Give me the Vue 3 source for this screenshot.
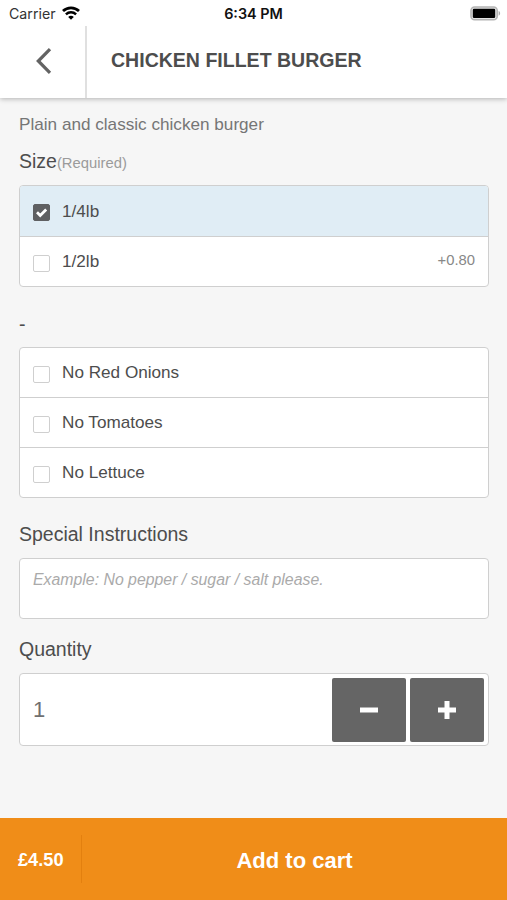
<script setup>
import { ref, computed } from 'vue'

const sizes = ref([
  { label: '1/4lb', extra: '', checked: true },
  { label: '1/2lb', extra: '+0.80', checked: false },
])
const removals = ref([
  { label: 'No Red Onions', checked: false },
  { label: 'No Tomatoes', checked: false },
  { label: 'No Lettuce', checked: false },
])
const quantity = ref(1)
const notes = ref('')

const price = computed(() => {
  const unit = sizes.value[1].checked ? 5.3 : 4.5
  return '£' + (unit * quantity.value).toFixed(2)
})

function pickSize(size) {
  sizes.value.forEach((s) => { s.checked = s === size })
}
</script>

<template>
  <div class="screen">
    <header class="top">
      <div class="status">
        <div class="carrier">
          <span>Carrier</span>
          <svg class="wifi" width="18" height="14" viewBox="0 0 18 14">
            <path d="M1 5.1C5.5.8 12.5.8 17 5.1" fill="none" stroke="#000" stroke-width="2.8" />
            <path d="M3.900 8.300c2.900-2.700 7.300-2.700 10.200 0" fill="none" stroke="#000" stroke-width="2.500" />
            <path d="M9 13.800 6.200 10.900c1.500-1.400 4.100-1.400 5.600 0z" fill="#000" />
          </svg>
        </div>
        <div class="clock">6:34 PM</div>
        <svg class="battery" width="31" height="15" viewBox="0 0 31 15">
          <rect x="1" y="1" width="26.200" height="12.800" rx="3.600" fill="#e4e4e4" stroke="#b4b4b4" stroke-width="1.600" />
          <rect x="2.800" y="2.700" width="22.400" height="9.300" rx="1.200" fill="#000" />
          <path d="M28.600 5c2 .7 2 4 0 4.700z" fill="#aaa" />
        </svg>
      </div>
      <div class="nav">
        <button class="back" aria-label="Back">
          <svg width="18" height="28" viewBox="0 0 18 28">
            <path d="M16 2.200 4.300 14 16 25.800" fill="none" stroke="#636363" stroke-width="3.200" />
          </svg>
        </button>
        <h1>CHICKEN FILLET BURGER</h1>
      </div>
    </header>

    <main>
      <p class="description">Plain and classic chicken burger</p>

      <h2 class="size-title">Size<small>(Required)</small></h2>
      <ul class="card">
        <li v-for="s in sizes" :key="s.label" :class="{ selected: s.checked }" @click="pickSize(s)">
          <span class="box" :class="{ on: s.checked }">
            <svg v-if="s.checked" width="15" height="15" viewBox="0 0 15 15">
              <path d="m3 7.300 3.200 3.200 6-6" fill="none" stroke="#fff" stroke-width="2.800" />
            </svg>
          </span>
          <span class="label">{{ s.label }}</span>
          <span class="extra">{{ s.extra }}</span>
        </li>
      </ul>

      <h2 class="dash-title">-</h2>
      <ul class="card removals">
        <li v-for="r in removals" :key="r.label" @click="r.checked = !r.checked">
          <span class="box" :class="{ on: r.checked }">
            <svg v-if="r.checked" width="15" height="15" viewBox="0 0 15 15">
              <path d="m3 7.300 3.200 3.200 6-6" fill="none" stroke="#fff" stroke-width="2.800" />
            </svg>
          </span>
          <span class="label">{{ r.label }}</span>
        </li>
      </ul>

      <h2 class="notes-title">Special Instructions</h2>
      <textarea v-model="notes" placeholder="Example: No pepper / sugar / salt please."></textarea>

      <h2 class="quantity-title">Quantity</h2>
      <div class="quantity">
        <span class="count">{{ quantity }}</span>
        <button aria-label="Decrease" @click="quantity = Math.max(1, quantity - 1)">
          <svg width="18" height="18" viewBox="0 0 18 18"><path d="M0 6.500h18v5H0z" fill="#fff" /></svg>
        </button>
        <button aria-label="Increase" @click="quantity++">
          <svg width="18" height="18" viewBox="0 0 18 18"><path d="M6.500 0h5v6.500H18v5h-6.500V18h-5v-6.500H0v-5h6.500z" fill="#fff" /></svg>
        </button>
      </div>
    </main>

    <footer>
      <span class="price">{{ price }}</span>
      <span class="rule"></span>
      <span class="add">Add to cart</span>
    </footer>
  </div>
</template>

<style>
body {
  background: #f6f6f6;
}
</style>

<style scoped>
.screen {
  display: flex;
  flex-direction: column;
  height: 900px;
  overflow: hidden;
  background: #f6f6f6;
  color: #4d4d4d;
  font-family: "Liberation Sans", Arial, sans-serif;
}
button {
  border: 0;
  padding: 0;
  display: flex;
  align-items: center;
  justify-content: center;
}
h1, h2, p, ul {
  margin: 0;
  padding: 0;
}
.top {
  flex: none;
  height: 98px;
  background: #fff;
  box-shadow: 0 1px 5px rgba(0, 0, 0, 0.28);
}
.status {
  display: grid;
  grid-template-columns: 1fr auto 1fr;
  height: 26px;
  box-sizing: border-box;
  padding: 5px 6px 0 9px;
  font-family: Inter, sans-serif;
  font-size: 14.200px;
  line-height: 18px;
  color: #111;
}
.carrier {
  display: flex;
  gap: 6px;
  color: #333;
}
.wifi {
  margin-top: 1px;
}
.clock {
  font-weight: 600;
  font-size: 14.400px;
  margin-left: -3px;
}
.battery {
  justify-self: end;
  margin-top: 1px;
}
.nav {
  display: flex;
  height: 72px;
}
.back {
  width: 87px;
  box-sizing: border-box;
  border-right: 2px solid #e0e0e0;
  background: #fff;
}
.back svg {
  margin-top: -2px;
}
h1 {
  padding-left: 24px;
  font-size: 19.55px;
  line-height: 69px;
  font-weight: 700;
  white-space: nowrap;
}
main {
  flex: 1;
  padding: 0 18px 0 19px;
}
.description {
  padding-top: 15px;
  font-size: 17.15px;
  line-height: 22px;
  color: #757575;
}
h2 {
  font-size: 19.5px;
  line-height: 24px;
  font-weight: 400;
}
h2 small {
  font-size: 14.800px;
  color: #9b9b9b;
}
.size-title {
  margin: 14px 0 10px;
}
.dash-title {
  margin: 25px 0 11px;
}
.notes-title {
  margin: 24px 0 12px;
}
.quantity-title {
  margin: 18px 0 12px;
}
.card {
  list-style: none;
  border: 1px solid #cfcfcf;
  border-radius: 4px;
  background: #fff;
  overflow: hidden;
}
.card li {
  display: flex;
  align-items: center;
  box-sizing: border-box;
  height: 50px;
  padding: 0 13px 0 13px;
}
.removals li:first-child {
  height: 49px;
}
.card li + li {
  border-top: 1px solid #cfcfcf;
}
.card .selected {
  background: #e0edf5;
}
.box {
  box-sizing: border-box;
  width: 17px;
  height: 17px;
  margin-top: 3px;
  border: 1px solid #cfcfcf;
  border-radius: 2px;
  background: #fff;
}
.box.on {
  border-color: #5f6062;
  background: #5f6062;
}
.box svg {
  display: block;
}
.label {
  flex: 1;
  padding-left: 12px;
  font-size: 17.15px;
}
.extra {
  font-size: 14.800px;
  color: #888;
  margin-top: -3px;
}
textarea {
  display: block;
  box-sizing: border-box;
  width: 100%;
  height: 61px;
  padding: 10px 13px;
  border: 1px solid #cfcfcf;
  border-radius: 4px;
  background: #fff;
  color: #4d4d4d;
  font-family: inherit;
  font-size: 15.850px;
  line-height: 22px;
  resize: none;
  outline: 0;
}
textarea::placeholder {
  color: #aaa;
  font-style: italic;
}
.quantity {
  display: flex;
  align-items: center;
  gap: 4px;
  box-sizing: border-box;
  height: 73px;
  padding-right: 4px;
  border: 1px solid #cfcfcf;
  border-radius: 4px;
  background: #fff;
}
.count {
  flex: 1;
  padding-left: 13px;
  font-size: 22px;
  color: #707070;
}
.quantity button {
  width: 74px;
  height: 64px;
  border-radius: 2px;
  background: #656565;
}
footer {
  flex: none;
  display: flex;
  align-items: center;
  height: 82px;
  background: #f08d18;
  color: #fff;
  font-weight: 700;
}
.price {
  width: 63px;
  padding: 2px 0 0 18px;
  font-size: 18.200px;
}
.rule {
  width: 1px;
  height: 48px;
  background: #e3800f;
}
.add {
  flex: 1;
  text-align: center;
  font-size: 22px;
  line-height: 24px;
  padding: 4px 0 0;
}
</style>
